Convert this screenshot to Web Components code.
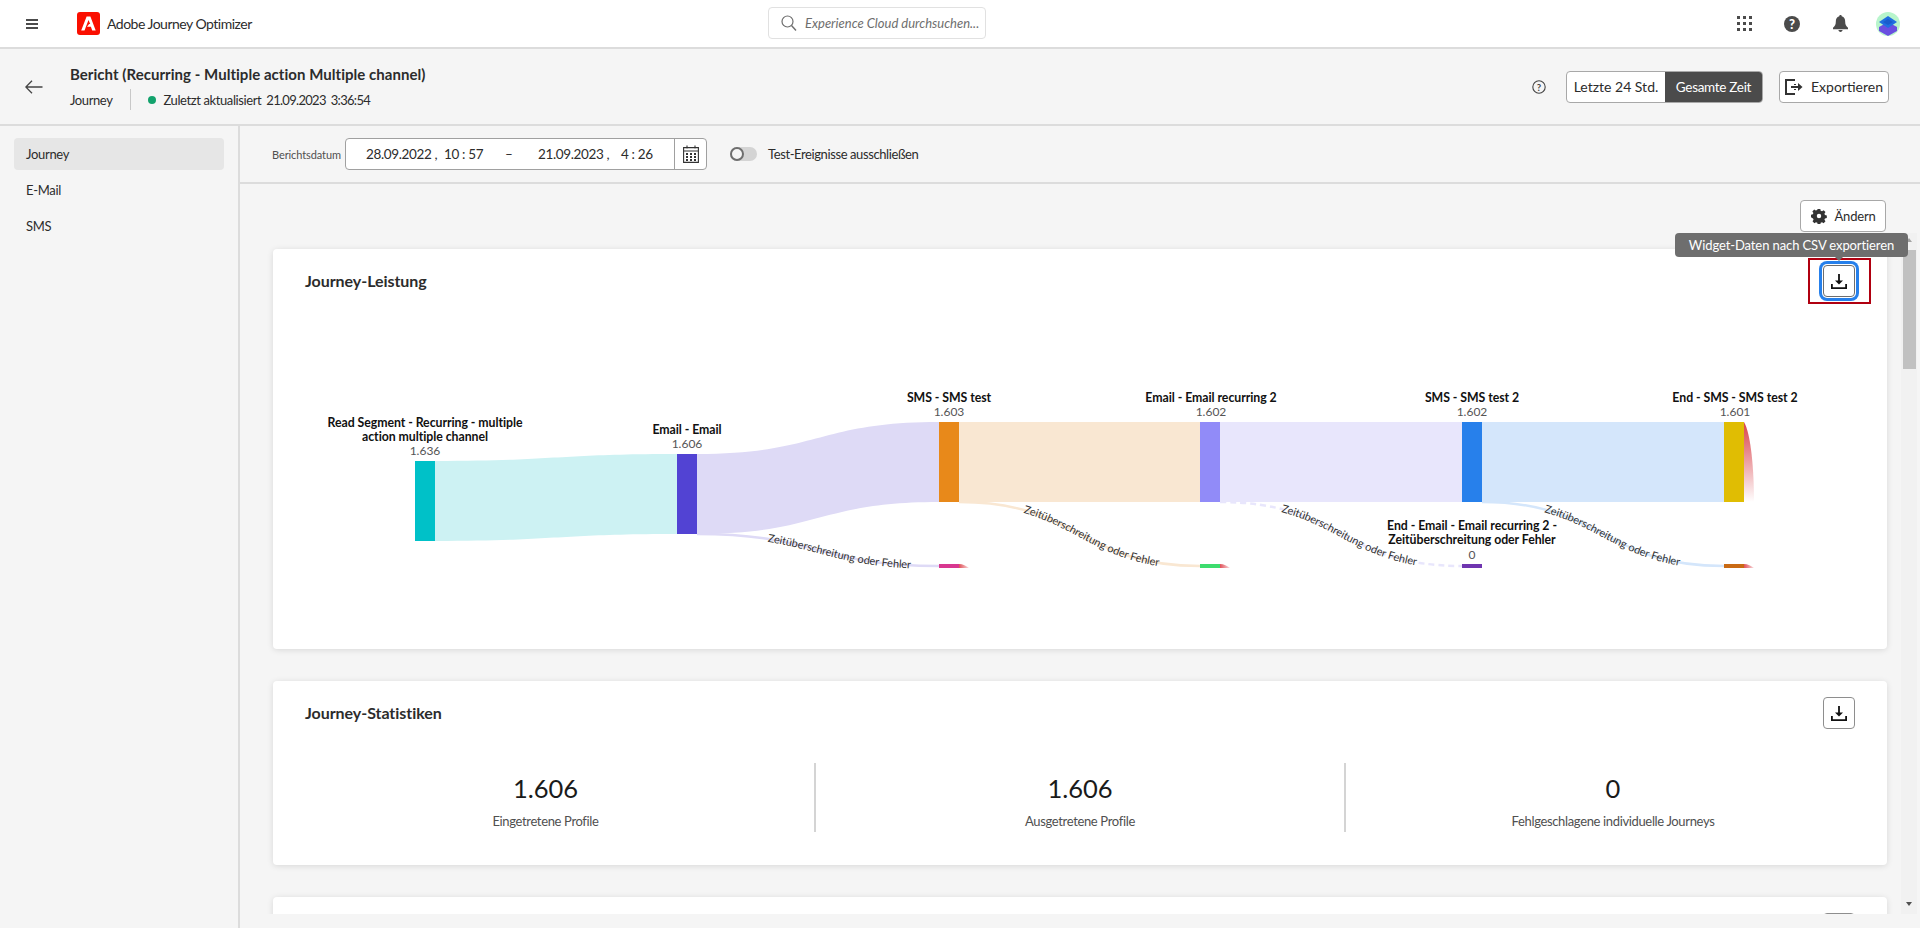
<!doctype html>
<html lang="de">
<head>
<meta charset="utf-8">
<title>Adobe Journey Optimizer</title>
<style>
  html, body { margin: 0; height: 100%; overflow: hidden; }
  body { background: #f5f5f5; color: #2c2c2c; font: 14px Lato, "Noto Sans", sans-serif; }
</style>
</head>
<body>
<ajo-app></ajo-app>

<template id="top-bar-tpl">
  <style>
    :host { display: flex; align-items: center; height: 47px; background: #fff; border-bottom: 2px solid #dcdcdc; position: relative; font-size: 14px; color: #2c2c2c; }
    .burger { margin-left: 26px; width: 12px; height: 10px; display: block; }
    .logo { margin-left: 39px; width: 23px; height: 23px; display: block; }
    .name { margin-left: 7px; white-space: nowrap; letter-spacing: -.5px; }
    .search { position: absolute; left: 768px; top: 7px; width: 218px; height: 32px; box-sizing: border-box; border: 1px solid #e1e1e1; border-radius: 4px; display: flex; align-items: center; padding-left: 12px; gap: 8px; color: #6e6e6e; font-style: italic; font-size: 13px; background: #fff; }
    .right { margin-left: auto; display: flex; align-items: center; padding-right: 8px; }
    .cell { width: 48px; display: flex; justify-content: center; }
    svg { display: block; }
  </style>
  <svg class="burger" viewBox="0 0 12 10"><path fill="#4b4b4b" d="M0 0h12v2H0zM0 4h12v2H0zM0 8h12v2H0z"/></svg>
  <svg class="logo" viewBox="0 0 23 23"><rect width="23" height="23" rx="3" fill="#fa0f00"/><path fill="#fff" d="M9.600 4.500h3.800l5.300 14h-3.500l-1.300-3.700H10l2.100-2.800h1.100L11.500 8l-4 10.500H4.200z"/></svg>
  <span class="name">Adobe Journey Optimizer</span>
  <div class="search">
    <svg width="16" height="16" viewBox="0 0 16 16"><circle cx="6.500" cy="6.500" r="5.500" fill="none" stroke="#6e6e6e" stroke-width="1.200"/><path d="M10.500 10.500L15 15.500" stroke="#6e6e6e" stroke-width="1.400"/></svg>
    <span>Experience Cloud durchsuchen...</span>
  </div>
  <div class="right">
    <div class="cell"><svg width="15" height="15" viewBox="0 0 15 15" fill="#4b4b4b"><path d="M0 0h3v3H0zM6 0h3v3H6zM12 0h3v3h-3zM0 6h3v3H0zM6 6h3v3H6zM12 6h3v3h-3zM0 12h3v3H0zM6 12h3v3H6zM12 12h3v3h-3z"/></svg></div>
    <div class="cell"><svg width="16" height="16" viewBox="0 0 16 16"><circle cx="8" cy="8" r="8" fill="#4b4b4b"/><text x="8" y="12.800" text-anchor="middle" font-family="Lato, sans-serif" font-weight="900" font-size="13" fill="#fff">?</text></svg></div>
    <div class="cell"><svg width="15" height="17" viewBox="0 0 16 18" fill="#4b4b4b"><path d="M8 0c.8 0 1.300.5 1.300 1.300C12 2 13 4.200 13 7c0 3 1 4.500 3 6.500V15H0v-1.500C2 11.500 3 10 3 7c0-2.800 1-5 3.700-5.700C6.700.5 7.200 0 8 0zM5.800 16h4.400c0 1.200-1 2-2.200 2s-2.200-.8-2.200-2z"/></svg></div>
    <div class="cell"><svg width="24" height="24" viewBox="0 0 24 24"><defs><clipPath id="av"><circle cx="12" cy="12" r="12"/></clipPath></defs><g clip-path="url(#av)"><rect width="24" height="24" fill="#b8f5cc"/><path fill="#6a4fe0" d="M3 15l9-5 9 5v4l-9 5-9-5z"/><path fill="#1f6fe0" d="M3 10l9-6 9 6-9 6z"/><path fill="#1a5ccc" d="M7 10l5-3 5 3-5 3z"/></g></svg></div>
  </div>
</template>

<template id="report-header-tpl">
  <style>
    :host { display: flex; align-items: center; height: 75px; border-bottom: 2px solid #dcdcdc; font-size: 13px; color: #2c2c2c; }
    .back { margin-left: 25px; width: 18px; height: 14px; display: block; }
    .titles { margin-left: 27px; margin-top: 2px; display: flex; flex-direction: column; gap: 6px; }
    .title { font-size: 15px; font-weight: 700; white-space: nowrap; letter-spacing: .04px; }
    .meta { display: flex; align-items: center; height: 21px; letter-spacing: -.4px; }
    .sep { width: 1px; height: 21px; background: #c8c8c8; margin: 0 17px 0 18px; }
    .dot { width: 8px; height: 8px; border-radius: 50%; background: #12a26c; margin-right: 7px; }
    .date { margin-left: 5px; letter-spacing: -.7px; }
    .right { margin-left: auto; margin-right: 31px; display: flex; align-items: center; }
    .help { display: block; margin-right: 20px; }
    .seg { display: flex; height: 32px; box-sizing: border-box; border: 1px solid #a8a8a8; border-radius: 4px; overflow: hidden; background: #fff; }
    .seg span { display: flex; align-items: center; justify-content: center; font-size: 14px; }
    .seg .a { width: 98px; }
    .seg .b { width: 97px; background: #4b4b4b; color: #fff; font-size: 13.500px; letter-spacing: -.3px; }
    .btn { margin-left: 16px; width: 110px; height: 32px; box-sizing: border-box; border: 1px solid #a8a8a8; border-radius: 4px; background: #fff; display: flex; align-items: center; justify-content: center; gap: 8px; font-size: 14px; }
  </style>
  <svg class="back" viewBox="0 0 18 14"><path d="M17.500 7H1M7 .8L.8 7 7 13.200" fill="none" stroke="#444" stroke-width="1.300"/></svg>
  <div class="titles">
    <div class="title">Bericht (Recurring - Multiple action Multiple channel)</div>
    <div class="meta">
      <span>Journey</span><span class="sep"></span><span class="dot"></span><span>Zuletzt aktualisiert</span><span class="date">21.09.2023</span><span class="date">3:36:54</span>
    </div>
  </div>
  <div class="right">
    <svg class="help" width="14" height="14" viewBox="0 0 14 14"><circle cx="7" cy="7" r="6.200" fill="none" stroke="#444" stroke-width="1.100"/><text x="7" y="10.500" text-anchor="middle" font-family="Lato, sans-serif" font-size="9.500" font-weight="700" fill="#444">?</text></svg>
    <div class="seg"><span class="a">Letzte 24 Std.</span><span class="b">Gesamte Zeit</span></div>
    <div class="btn">
      <svg width="18" height="16" viewBox="0 0 18 16"><path d="M10 1H1v14h9M10 5v1M10 10v1" fill="none" stroke="#333" stroke-width="2"/><path d="M6 7h7V4l4.500 4-4.500 4V9H6z" fill="#333"/></svg>
      <span>Exportieren</span>
    </div>
  </div>
</template>

<template id="side-nav-tpl">
  <style>
    :host { display: block; width: 240px; flex: none; border-right: 2px solid #dcdcdc; padding: 12px 14px 0 14px; box-sizing: border-box; font-size: 13px; letter-spacing: -.3px; }
    ::slotted(a) { display: flex; align-items: center; height: 32px; padding-left: 12px; margin-bottom: 4px; border-radius: 4px; color: #2c2c2c; }
    ::slotted(a.on) { background: #e6e6e6; }
  </style>
  <slot></slot>
</template>

<template id="date-bar-tpl">
  <style>
    :host { display: flex; align-items: center; height: 56px; border-bottom: 2px solid #dcdcdc; padding-left: 32px; font-size: 13px; color: #2c2c2c; flex: none; }
    .lbl { font-size: 11px; color: #505050; width: 73px; white-space: nowrap; letter-spacing: -.1px; }
    .field { position: relative; width: 362px; height: 32px; box-sizing: border-box; border: 1px solid #a0a0a0; border-radius: 4px; background: #fff; display: flex; font-size: 13.500px; letter-spacing: -.35px; }
    .range { display: flex; align-items: center; width: 330px; padding-left: 20px; box-sizing: border-box; white-space: nowrap; }
    .range span { flex: none; }
    .cal { margin-left: auto; width: 31px; border-left: 1px solid #a0a0a0; display: flex; align-items: center; justify-content: center; }
    .toggle { margin-left: 23px; width: 27px; height: 14px; border-radius: 7px; background: #d4d4d4; position: relative; }
    .toggle::before { content: ""; position: absolute; left: 0; top: 0; width: 14px; height: 14px; box-sizing: border-box; border: 2px solid #6e6e6e; border-radius: 50%; background: #f5f5f5; }
    .tl { margin-left: 11px; white-space: nowrap; letter-spacing: -.4px; }
  </style>
  <span class="lbl">Berichtsdatum</span>
  <div class="field">
    <div class="range">
      <span style="width:78px">28.09.2022 ,</span><span style="width:61px">10 : 57</span><span style="width:33px">–</span><span style="width:83px">21.09.2023 ,</span><span>4 : 26</span>
    </div>
    <div class="cal">
      <svg width="16" height="18" viewBox="0 0 16 18"><path d="M.6 2.600h14.800v14.800H.6zM.6 6h14.800M4 .5v3M12 .5v3" fill="none" stroke="#333" stroke-width="1.100"/><path fill="#333" d="M3 8h2v2H3zM7 8h2v2H7zM11 8h2v2h-2zM3 11h2v2H3zM7 11h2v2H7zM11 11h2v2h-2zM3 14h2v2H3zM7 14h2v2H7zM11 14h2v2h-2z"/></svg>
    </div>
  </div>
  <span class="toggle"></span>
  <span class="tl">Test-Ereignisse ausschließen</span>
</template>

<template id="icon-button-tpl">
  <style>
    :host { display: flex; align-items: center; justify-content: center; width: 32px; height: 32px; box-sizing: border-box; border: 1px solid #8e8e8e; border-radius: 4px; background: #fff; position: relative; }
    svg { display: block; }
    :host([focused]) { border-color: #6e6e6e; box-shadow: 0 0 0 1px #fff, 0 0 0 4px #2680eb; }
  </style>
  <svg width="16" height="15" viewBox="0 0 16 15" fill="#111"><path d="M7.100 0h1.800v6.500H12L8 10.500 4 6.500h3.100z"/><path d="M0 10h1.800v3.200h12.400V10H16v5H0z"/></svg>
</template>

<template id="report-card-tpl">
  <style>
    :host { display: block; background: #fff; border-radius: 4px; box-shadow: 0 1px 6px rgba(0,0,0,.12); position: relative; }
    header { display: flex; align-items: center; justify-content: space-between; padding: 16px 32px 0 32px; height: 32px; }
    h2 { margin: 0 0 2px; font-size: 16px; font-weight: 700; color: #2c2c2c; letter-spacing: -.05px; }
  </style>
  <header><h2><slot name="title"></slot></h2><slot name="action"></slot></header>
  <slot></slot>
</template>

<template id="stat-row-tpl">
  <style>
    :host { display: grid; grid-template-columns: 543px 530px 541px; margin: 34px 0 0 0; }
    ::slotted(stat-cell:not(:last-child)) { border-right: 2px solid #d4d4d4; }
    ::slotted(stat-cell:first-child) { padding-left: 4px; }
    ::slotted(stat-cell:last-child) { padding-right: 7px; }
  </style>
  <slot></slot>
</template>

<template id="stat-cell-tpl">
  <style>
    :host { display: flex; flex-direction: column; align-items: center; height: 69px; color: #2c2c2c; }
    .n { font-size: 25.500px; line-height: 34px; margin-top: 8px; color: #1a1a1a; }
    .l { font-size: 13px; margin-top: 8px; color: #505050; letter-spacing: -.35px; }
  </style>
  <div class="n"><slot name="n"></slot></div>
  <div class="l"><slot name="l"></slot></div>
</template>

<template id="journey-sankey-tpl">
  <style>
    :host { display: block; height: 352px; }
    svg { display: block; overflow: visible; font-family: Lato, "Noto Sans", sans-serif; }
    .nm { font-size: 12.300px; font-weight: 700; fill: #111; text-anchor: middle; letter-spacing: -.05px; }
    .val { font-size: 12px; fill: #555; text-anchor: middle; }
    .lk { font-size: 11px; fill: #333; letter-spacing: -.1px; }
  </style>
  <svg width="1614" height="352" viewBox="273 297 1614 352">
    <defs>
      <linearGradient id="tail" x1="0" y1="0" x2="0" y2="1"><stop offset="0" stop-color="#d9434b"/><stop offset="1" stop-color="#d9434b" stop-opacity="0"/></linearGradient>
      <linearGradient id="tail2" x1="0" y1="0" x2="1" y2="0"><stop offset="0" stop-color="#e0525a"/><stop offset="1" stop-color="#e0525a" stop-opacity=".2"/></linearGradient>
    </defs>

    <path fill="#cdf2f3" d="M435 461C556 461 556 454 677 454V534C556 534 556 541 435 541z"/>
    <path fill="#dedaf6" d="M697 454C818 454 818 422 939 422V502C818 502 818 534 697 534z"/>
    <rect x="959" y="422" width="241" height="80" fill="#f9e7d2"/>
    <rect x="1220" y="422" width="242" height="80" fill="#e8e6fc"/>
    <rect x="1482" y="422" width="242" height="80" fill="#d4e6fb"/>

    <path id="e1" d="M697 534C818 534 818 566 939 566" fill="none" stroke="#dedaf6" stroke-width="2.500"/>
    <path id="e2" d="M959 502C1080 502 1080 566 1200 566" fill="none" stroke="#f9e7d2" stroke-width="2.500"/>
    <path id="e3" d="M1220 502C1341 502 1341 566 1462 566" fill="none" stroke="#e8e6fc" stroke-width="2.500" stroke-dasharray="6 4"/>
    <path id="e4" d="M1482 502C1603 502 1603 566 1724 566" fill="none" stroke="#d4e6fb" stroke-width="2.500"/>

    <rect x="415" y="461" width="20" height="80" fill="#00c1c8"/>
    <rect x="677" y="454" width="20" height="80" fill="#5243d3"/>
    <rect x="939" y="422" width="20" height="80" fill="#e8891a"/>
    <rect x="1200" y="422" width="20" height="80" fill="#918bf8"/>
    <rect x="1462" y="422" width="20" height="80" fill="#2780eb"/>
    <rect x="1724" y="422" width="20" height="80" fill="#e0bd03"/>
    <rect x="939" y="564" width="20" height="4" fill="#d83790"/>
    <rect x="1200" y="564" width="20" height="4" fill="#3ddc6e"/>
    <rect x="1462" y="564" width="20" height="4" fill="#6f35b0"/>
    <rect x="1724" y="564" width="20" height="4" fill="#c96a14"/>

    <path fill="url(#tail)" d="M1744 422C1751 434 1754 470 1754 502H1744z"/>
    <path fill="url(#tail2)" d="M959 564C963 564 966 566 969 568H959z"/>
    <path fill="url(#tail2)" d="M1220 564C1224 564 1227 566 1230 568H1220z"/>
    <path fill="url(#tail2)" d="M1744 564C1748 564 1751 566 1754 568H1744z"/>

    <text class="nm" x="425" y="427">Read Segment - Recurring - multiple</text>
    <text class="nm" x="425" y="441">action multiple channel</text>
    <text class="val" x="425" y="455">1.636</text>
    <text class="nm" x="687" y="434">Email - Email</text>
    <text class="val" x="687" y="448">1.606</text>
    <text class="nm" x="949" y="402">SMS - SMS test</text>
    <text class="val" x="949" y="416">1.603</text>
    <text class="nm" x="1211" y="402">Email - Email recurring 2</text>
    <text class="val" x="1211" y="416">1.602</text>
    <text class="nm" x="1472" y="402">SMS - SMS test 2</text>
    <text class="val" x="1472" y="416">1.602</text>
    <text class="nm" x="1735" y="402">End - SMS - SMS test 2</text>
    <text class="val" x="1735" y="416">1.601</text>
    <text class="nm" x="1472" y="530">End - Email - Email recurring 2 -</text>
    <text class="nm" x="1472" y="544">Zeitüberschreitung oder Fehler</text>
    <text class="val" x="1472" y="559">0</text>

    <text class="lk" dy="3"><textPath href="#e1" startOffset="29%">Zeitüberschreitung oder Fehler</textPath></text>
    <text class="lk" dy="3"><textPath href="#e2" startOffset="26%">Zeitüberschreitung oder Fehler</textPath></text>
    <text class="lk" dy="3"><textPath href="#e3" startOffset="24.500%">Zeitüberschreitung oder Fehler</textPath></text>
    <text class="lk" dy="3"><textPath href="#e4" startOffset="25%">Zeitüberschreitung oder Fehler</textPath></text>
  </svg>
</template>

<template id="scroll-rail-tpl">
  <style>
    :host { position: absolute; top: 0; right: 3px; bottom: 0; width: 16px; background: #f1f1f1; }
    .thumb { position: absolute; left: 2px; width: 13px; top: 17px; height: 119px; background: #c1c1c1; }
    .up, .down { position: absolute; left: 5px; width: 0; height: 0; border-left: 3.500px solid transparent; border-right: 3.500px solid transparent; }
    .up { top: 5px; border-bottom: 4px solid #a3a3a3; }
    .down { bottom: 8px; border-top: 4px solid #505050; }
  </style>
  <div class="up"></div><div class="thumb"></div><div class="down"></div>
</template>

<template id="main-view-tpl">
  <style>
    :host { display: flex; flex-direction: column; flex: 1; min-width: 0; position: relative; }
    .tools { flex: none; display: flex; justify-content: flex-end; height: 49px; padding: 16px 34px 0 0; box-sizing: border-box; }
    .btn { width: 86px; height: 32px; box-sizing: border-box; border: 1px solid #a8a8a8; border-radius: 4px; background: #fff; display: flex; align-items: center; justify-content: center; gap: 8px; font-size: 13px; letter-spacing: -.2px; }
    .scroll { position: relative; height: 681px; flex: none; overflow: hidden; }
    .inner { padding: 16px 33px 0 33px; display: flex; flex-direction: column; gap: 32px; }
    .tip { position: absolute; left: 1435px; top: 107px; width: 233px; height: 24px; border-radius: 4px; background: #6e6e6e; color: #fff; font-size: 13px; letter-spacing: -.1px; display: flex; align-items: center; justify-content: center; z-index: 3; white-space: nowrap; }
    .tip::after { content: ""; position: absolute; left: 160px; top: 24px; border: 4px solid transparent; border-top-color: #6e6e6e; border-bottom: 0; }
    .mark { position: absolute; left: 1568px; top: 132px; width: 63px; height: 46px; box-sizing: border-box; border: 2px solid #b00010; z-index: 2; }
  </style>
  <slot name="bar"></slot>
  <div class="tools">
    <div class="btn">
      <svg width="16" height="16" viewBox="-1 -1 18 18"><path fill="#333" fill-rule="evenodd" d="M6.500 0h3l.4 2.100 1.500.6L13.200 1.500l2.100 2.100-1.200 1.800.6 1.500 2.100.4v3l-2.100.4-.6 1.500 1.200 1.800-2.100 2.100-1.800-1.200-1.500.6-.4 2.100h-3l-.4-2.100-1.500-.6-1.800 1.200-2.100-2.100 1.200-1.800-.6-1.500L-1 9.500v-3l2.100-.4.6-1.500-1.200-1.800 2.100-2.100 1.800 1.200 1.500-.6zM8 5.500a2.500 2.500 0 100 5 2.500 2.500 0 000-5z"/></svg>
      <span>Ändern</span>
    </div>
  </div>
  <div class="tip">Widget-Daten nach CSV exportieren</div>
  <div class="mark"></div>
  <div class="scroll">
    <div class="inner"><slot></slot></div>
    <scroll-rail></scroll-rail>
  </div>
</template>

<template id="ajo-app-tpl">
  <style>
    :host { display: flex; flex-direction: column; height: 928px; }
    .body { display: flex; flex: 1; min-height: 0; }
  </style>
  <top-bar></top-bar>
  <report-header></report-header>
  <div class="body">
    <side-nav>
      <a class="on">Journey</a>
      <a>E-Mail</a>
      <a>SMS</a>
    </side-nav>
    <main-view>
      <date-bar slot="bar"></date-bar>
      <report-card style="height:400px">
        <span slot="title">Journey-Leistung</span>
        <icon-button slot="action" focused></icon-button>
        <journey-sankey></journey-sankey>
      </report-card>
      <report-card style="height:184px">
        <span slot="title">Journey-Statistiken</span>
        <icon-button slot="action"></icon-button>
        <stat-row>
          <stat-cell><span slot="n">1.606</span><span slot="l">Eingetretene Profile</span></stat-cell>
          <stat-cell><span slot="n">1.606</span><span slot="l">Ausgetretene Profile</span></stat-cell>
          <stat-cell><span slot="n">0</span><span slot="l">Fehlgeschlagene individuelle Journeys</span></stat-cell>
        </stat-row>
      </report-card>
      <report-card style="height:184px">
        <icon-button slot="action" style="margin-left:auto"></icon-button>
      </report-card>
    </main-view>
  </div>
</template>

<script>
  // every element is the same: clone its template into an open shadow root
  const tags = ['top-bar', 'report-header', 'side-nav', 'date-bar', 'icon-button', 'report-card',
    'stat-row', 'stat-cell', 'journey-sankey', 'scroll-rail', 'main-view', 'ajo-app'];
  for (const tag of tags) {
    customElements.define(tag, class extends HTMLElement {
      constructor() {
        super();
        const tpl = document.getElementById(tag + '-tpl');
        this.attachShadow({ mode: 'open' }).appendChild(tpl.content.cloneNode(true));
      }
    });
  }
</script>
</body>
</html>
